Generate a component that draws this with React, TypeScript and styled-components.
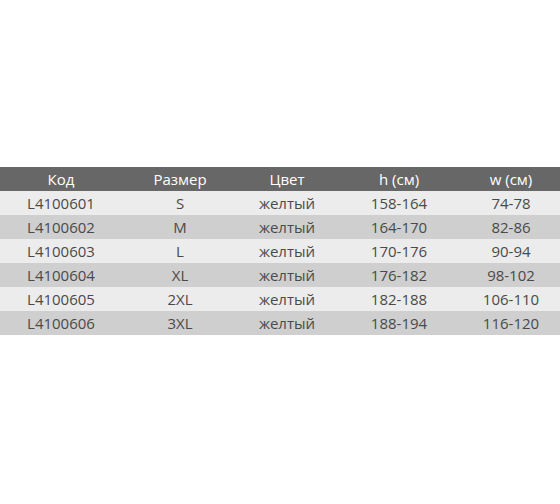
import React from "react";
import styled, { createGlobalStyle } from "styled-components";

const Global = createGlobalStyle`
  html, body { margin: 0; padding: 0; background: #ffffff; }
  body { width: 560px; height: 504px; overflow: hidden; font-family: "Open Sans", "DejaVu Sans", sans-serif; }
`;

const Page = styled.div`
  width: 560px;
  height: 504px;
  padding-top: 167px;
  box-sizing: border-box;
`;

const Table = styled.div`
  display: grid;
  grid-template-columns: 122px 116px 98px 126px 98px;
`;

const Row = styled.div<{ $variant: "head" | "light" | "dark" }>`
  display: contents;
  & > div {
    background: ${(p) =>
      p.$variant === "head" ? "#676767" : p.$variant === "dark" ? "#cfcfcf" : "#ececec"};
    color: ${(p) => (p.$variant === "head" ? "#ffffff" : "#4a4a4a")};
    height: 24px;
  }
`;

const Cell = styled.div`
  display: flex;
  align-items: center;
  justify-content: center;
  font-size: 15px;
  line-height: 24px;
  white-space: nowrap;
`;

const head = ["Код", "Размер", "Цвет", "h (см)", "w (см)"];
const rows = [
  ["L4100601", "S", "желтый", "158-164", "74-78"],
  ["L4100602", "M", "желтый", "164-170", "82-86"],
  ["L4100603", "L", "желтый", "170-176", "90-94"],
  ["L4100604", "XL", "желтый", "176-182", "98-102"],
  ["L4100605", "2XL", "желтый", "182-188", "106-110"],
  ["L4100606", "3XL", "желтый", "188-194", "116-120"],
];

export default function App() {
  return (
    <>
      <Global />
      <Page>
        <Table>
          <Row $variant="head">
            {head.map((h) => (
              <Cell key={h}>{h}</Cell>
            ))}
          </Row>
          {rows.map((r, i) => (
            <Row key={r[0]} $variant={i % 2 === 0 ? "light" : "dark"}>
              {r.map((c, j) => (
                <Cell key={j}>{c}</Cell>
              ))}
            </Row>
          ))}
        </Table>
      </Page>
    </>
  );
}
